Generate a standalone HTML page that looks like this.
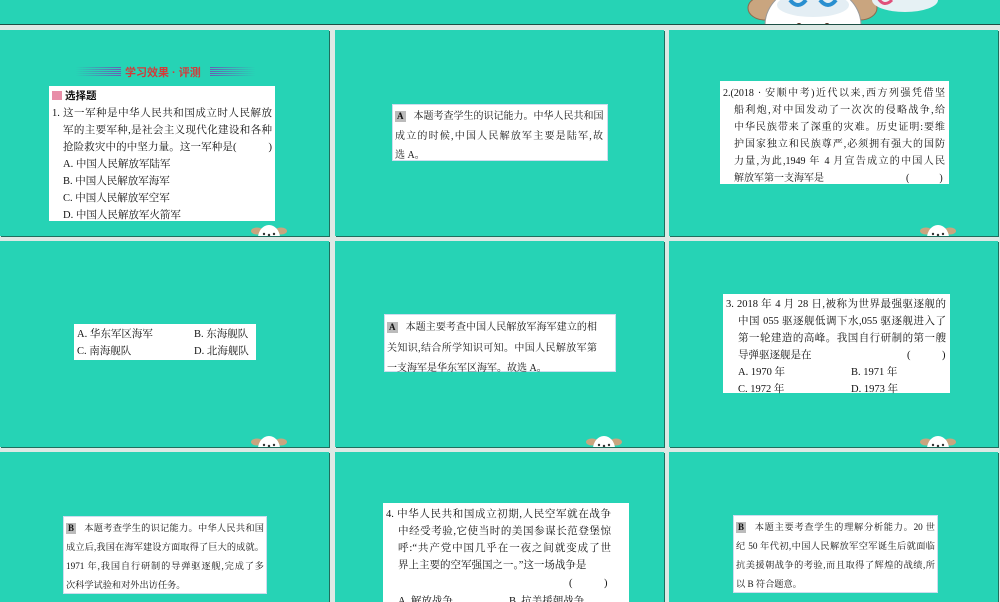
<!DOCTYPE html>
<html><head><meta charset="utf-8">
<style>
html,body{margin:0;padding:0;}
body{width:1000px;height:600px;position:relative;overflow:hidden;background:#dde9e5;font-family:"Liberation Serif","Noto Serif CJK SC",serif;color:#111;}
.s{position:absolute;background:#26d3b5;box-shadow:1px 1px 0 #1f6e5e;overflow:hidden;}
.b{position:absolute;background:#fff;border:1px solid #cde;font-size:10px;box-sizing:border-box;}
.l{position:absolute;white-space:nowrap;}
.j{text-align:justify;text-align-last:justify;white-space:nowrap;overflow:hidden;}
.tag{display:inline-block;background:#bbb;font-weight:bold;font-size:9px;padding:0 2px;margin-right:8px;line-height:11px;}
</style></head><body>
<div class="s" style="left:0;top:0;width:1000px;height:24px;border-bottom:1px solid #1d4f45;box-shadow:none;">
<svg style="position:absolute;left:745px;top:-30px" width="140" height="55" viewBox="0 0 140 55">
<ellipse cx="20" cy="38" rx="17" ry="12" fill="#c9a57f" stroke="#8a6a4e"/>
<ellipse cx="115" cy="38" rx="17" ry="12" fill="#c9a57f" stroke="#8a6a4e"/>
<ellipse cx="68" cy="55" rx="48" ry="40" fill="#fff" stroke="#999"/>
<ellipse cx="68" cy="35" rx="36" ry="12" fill="#e4eef4"/>
<path d="M45 30 q8 10 16 0" stroke="#2a8fd0" stroke-width="4" fill="none"/>
<path d="M75 30 q8 10 16 0" stroke="#2a8fd0" stroke-width="4" fill="none"/>
<ellipse cx="54" cy="56" rx="3" ry="3" fill="#4a2a1a"/>
<ellipse cx="68" cy="57" rx="3" ry="2" fill="#4a2a1a"/>
<ellipse cx="82" cy="56" rx="3" ry="3" fill="#4a2a1a"/>
</svg>
<svg style="position:absolute;left:870px;top:-10px" width="70" height="28"><ellipse cx="35" cy="10" rx="33" ry="12" fill="#e6f1f4"/><path d="M8 8 q6 10 14 2" stroke="#e0507a" stroke-width="3" fill="none"/></svg>
</div>

<div class="s" style="left:0;top:30px;width:329px;height:206px;">
<div class="l" style="left:76px;top:37px;width:45px;height:9px;background:repeating-linear-gradient(#6a5cb4 0 1px,transparent 1px 2px);-webkit-mask:linear-gradient(90deg,transparent,#000);mask:linear-gradient(90deg,transparent,#000);"></div>
<div class="l" style="left:210px;top:37px;width:45px;height:9px;background:repeating-linear-gradient(#6a5cb4 0 1px,transparent 1px 2px);-webkit-mask:linear-gradient(90deg,#000,transparent);mask:linear-gradient(90deg,#000,transparent);"></div>
<div class="l" style="left:125px;top:34px;font-size:11px;font-weight:bold;color:#d43a3a;font-family:'Liberation Sans','Noto Sans CJK SC',sans-serif;">学习效果 · 评测</div>
<div class="b" style="left:49px;top:56px;width:226px;height:135px;border:none;font-size:10.5px">
<div class="l" style="left:3px;top:2px;font-weight:bold;font-family:'Liberation Sans','Noto Sans CJK SC',sans-serif;"><span style="display:inline-block;width:10px;height:9px;background:#e88ea8;margin-right:3px;vertical-align:-1px"></span>选择题</div>
<div class="l j" style="left:3px;top:19px;width:220px">1. 这一军种是中华人民共和国成立时人民解放</div>
<div class="l j" style="left:14px;top:36px;width:209px">军的主要军种,是社会主义现代化建设和各种</div>
<div class="l j" style="left:14px;top:53px;width:209px">抢险救灾中的中坚力量。这一军种是(　　　)</div>
<div class="l" style="left:14px;top:70px">A. 中国人民解放军陆军</div>
<div class="l" style="left:14px;top:87px">B. 中国人民解放军海军</div>
<div class="l" style="left:14px;top:104px">C. 中国人民解放军空军</div>
<div class="l" style="left:14px;top:121px">D. 中国人民解放军火箭军</div>
</div>
</div>
<div class="s" style="left:335px;top:30px;width:329px;height:206px;">
<div class="b" style="left:57px;top:74px;width:216px;height:57px;">
<div class="l j" style="left:2px;top:2px;width:208px"><span class="tag">A</span>本题考查学生的识记能力。中华人民共和国</div>
<div class="l j" style="left:2px;top:22px;width:208px">成立的时候,中国人民解放军主要是陆军,故</div>
<div class="l" style="left:2px;top:41px">选 A。</div>
</div>
</div>
<div class="s" style="left:669px;top:30px;width:329px;height:206px;">
<div class="b" style="left:51px;top:51px;width:229px;height:103px;border:none;">
<div class="l j" style="left:3px;top:3px;width:222px">2.(2018 · 安顺中考)近代以来,西方列强凭借坚</div>
<div class="l j" style="left:14px;top:20px;width:211px">船利炮,对中国发动了一次次的侵略战争,给</div>
<div class="l j" style="left:14px;top:37px;width:211px">中华民族带来了深重的灾难。历史证明:要维</div>
<div class="l j" style="left:14px;top:54px;width:211px">护国家独立和民族尊严,必须拥有强大的国防</div>
<div class="l j" style="left:14px;top:71px;width:211px">力量,为此,1949 年 4 月宣告成立的中国人民</div>
<div class="l" style="left:14px;top:88px">解放军第一支海军是</div>
<div class="l" style="left:186px;top:88px">(　　　)</div>
</div>
</div>

<div class="s" style="left:0;top:241px;width:329px;height:206px;">
<div class="b" style="left:74px;top:83px;width:182px;height:36px;border:none;font-size:10.5px">
<div class="l" style="left:3px;top:2px">A. 华东军区海军</div>
<div class="l" style="left:120px;top:2px">B. 东海舰队</div>
<div class="l" style="left:3px;top:19px">C. 南海舰队</div>
<div class="l" style="left:120px;top:19px">D. 北海舰队</div>
</div>
</div>
<div class="s" style="left:335px;top:241px;width:329px;height:206px;">
<div class="b" style="left:49px;top:73px;width:232px;height:58px;">
<div class="l j" style="left:2px;top:3px;width:210px"><span class="tag">A</span>本题主要考查中国人民解放军海军建立的相</div>
<div class="l j" style="left:2px;top:24px;width:210px">关知识,结合所学知识可知。中国人民解放军第</div>
<div class="l" style="left:2px;top:44px">一支海军是华东军区海军。故选 A。</div>
</div>
</div>
<div class="s" style="left:669px;top:241px;width:329px;height:206px;">
<div class="b" style="left:54px;top:53px;width:227px;height:99px;border:none;font-size:10.5px">
<div class="l j" style="left:3px;top:2px;width:220px">3. 2018 年 4 月 28 日,被称为世界最强驱逐舰的</div>
<div class="l j" style="left:15px;top:19px;width:208px">中国 055 驱逐舰低调下水,055 驱逐舰进入了</div>
<div class="l j" style="left:15px;top:36px;width:208px">第一轮建造的高峰。我国自行研制的第一艘</div>
<div class="l" style="left:15px;top:53px">导弹驱逐舰是在</div>
<div class="l" style="left:184px;top:53px">(　　　)</div>
<div class="l" style="left:15px;top:70px">A. 1970 年</div>
<div class="l" style="left:128px;top:70px">B. 1971 年</div>
<div class="l" style="left:15px;top:87px">C. 1972 年</div>
<div class="l" style="left:128px;top:87px">D. 1973 年</div>
</div>
</div>

<div class="s" style="left:0;top:452px;width:329px;height:150px;">
<div class="b" style="left:63px;top:64px;width:204px;height:78px;font-size:9.2px">
<div class="l j" style="left:2px;top:3px;width:198px"><span class="tag">B</span>本题考查学生的识记能力。中华人民共和国</div>
<div class="l j" style="left:2px;top:22px;width:198px">成立后,我国在海军建设方面取得了巨大的成就。</div>
<div class="l j" style="left:2px;top:41px;width:198px">1971 年,我国自行研制的导弹驱逐舰,完成了多</div>
<div class="l" style="left:2px;top:60px">次科学试验和对外出访任务。</div>
</div>
</div>
<div class="s" style="left:335px;top:452px;width:329px;height:150px;">
<div class="b" style="left:48px;top:51px;width:246px;height:110px;border:none;font-size:10.5px">
<div class="l j" style="left:3px;top:3px;width:225px">4. 中华人民共和国成立初期,人民空军就在战争</div>
<div class="l j" style="left:15px;top:20px;width:213px">中经受考验,它使当时的美国参谋长范登堡惊</div>
<div class="l j" style="left:15px;top:37px;width:213px">呼:“共产党中国几乎在一夜之间就变成了世</div>
<div class="l" style="left:15px;top:54px">界上主要的空军强国之一。”这一场战争是</div>
<div class="l" style="left:186px;top:72px">(　　　)</div>
<div class="l" style="left:15px;top:90px">A. 解放战争</div>
<div class="l" style="left:126px;top:90px">B. 抗美援朝战争</div>
</div>
</div>
<div class="s" style="left:669px;top:452px;width:329px;height:150px;">
<div class="b" style="left:64px;top:63px;width:205px;height:78px;font-size:9.2px">
<div class="l j" style="left:2px;top:3px;width:199px"><span class="tag">B</span>本题主要考查学生的理解分析能力。20 世</div>
<div class="l j" style="left:2px;top:22px;width:199px">纪 50 年代初,中国人民解放军空军诞生后就面临</div>
<div class="l j" style="left:2px;top:41px;width:199px">抗美援朝战争的考验,而且取得了辉煌的战绩,所</div>
<div class="l" style="left:2px;top:60px">以 B 符合题意。</div>
</div>
</div>

<svg style="position:absolute;left:249px;top:223px" width="40" height="13" viewBox="0 0 40 13"><ellipse cx="8" cy="8" rx="6" ry="3.5" fill="#c9a57f"/><ellipse cx="32" cy="8" rx="6" ry="3.5" fill="#c9a57f"/><ellipse cx="20" cy="15" rx="11" ry="13" fill="#fff"/><circle cx="15" cy="11" r="1.2" fill="#333"/><circle cx="20" cy="12" r="1.2" fill="#333"/><circle cx="25" cy="11" r="1.2" fill="#333"/></svg>
<svg style="position:absolute;left:918px;top:223px" width="40" height="13" viewBox="0 0 40 13"><ellipse cx="8" cy="8" rx="6" ry="3.5" fill="#c9a57f"/><ellipse cx="32" cy="8" rx="6" ry="3.5" fill="#c9a57f"/><ellipse cx="20" cy="15" rx="11" ry="13" fill="#fff"/><circle cx="15" cy="11" r="1.2" fill="#333"/><circle cx="20" cy="12" r="1.2" fill="#333"/><circle cx="25" cy="11" r="1.2" fill="#333"/></svg>
<svg style="position:absolute;left:249px;top:434px" width="40" height="13" viewBox="0 0 40 13"><ellipse cx="8" cy="8" rx="6" ry="3.5" fill="#c9a57f"/><ellipse cx="32" cy="8" rx="6" ry="3.5" fill="#c9a57f"/><ellipse cx="20" cy="15" rx="11" ry="13" fill="#fff"/><circle cx="15" cy="11" r="1.2" fill="#333"/><circle cx="20" cy="12" r="1.2" fill="#333"/><circle cx="25" cy="11" r="1.2" fill="#333"/></svg>
<svg style="position:absolute;left:584px;top:434px" width="40" height="13" viewBox="0 0 40 13"><ellipse cx="8" cy="8" rx="6" ry="3.5" fill="#c9a57f"/><ellipse cx="32" cy="8" rx="6" ry="3.5" fill="#c9a57f"/><ellipse cx="20" cy="15" rx="11" ry="13" fill="#fff"/><circle cx="15" cy="11" r="1.2" fill="#333"/><circle cx="20" cy="12" r="1.2" fill="#333"/><circle cx="25" cy="11" r="1.2" fill="#333"/></svg>
<svg style="position:absolute;left:918px;top:434px" width="40" height="13" viewBox="0 0 40 13"><ellipse cx="8" cy="8" rx="6" ry="3.5" fill="#c9a57f"/><ellipse cx="32" cy="8" rx="6" ry="3.5" fill="#c9a57f"/><ellipse cx="20" cy="15" rx="11" ry="13" fill="#fff"/><circle cx="15" cy="11" r="1.2" fill="#333"/><circle cx="20" cy="12" r="1.2" fill="#333"/><circle cx="25" cy="11" r="1.2" fill="#333"/></svg>
</body></html>
